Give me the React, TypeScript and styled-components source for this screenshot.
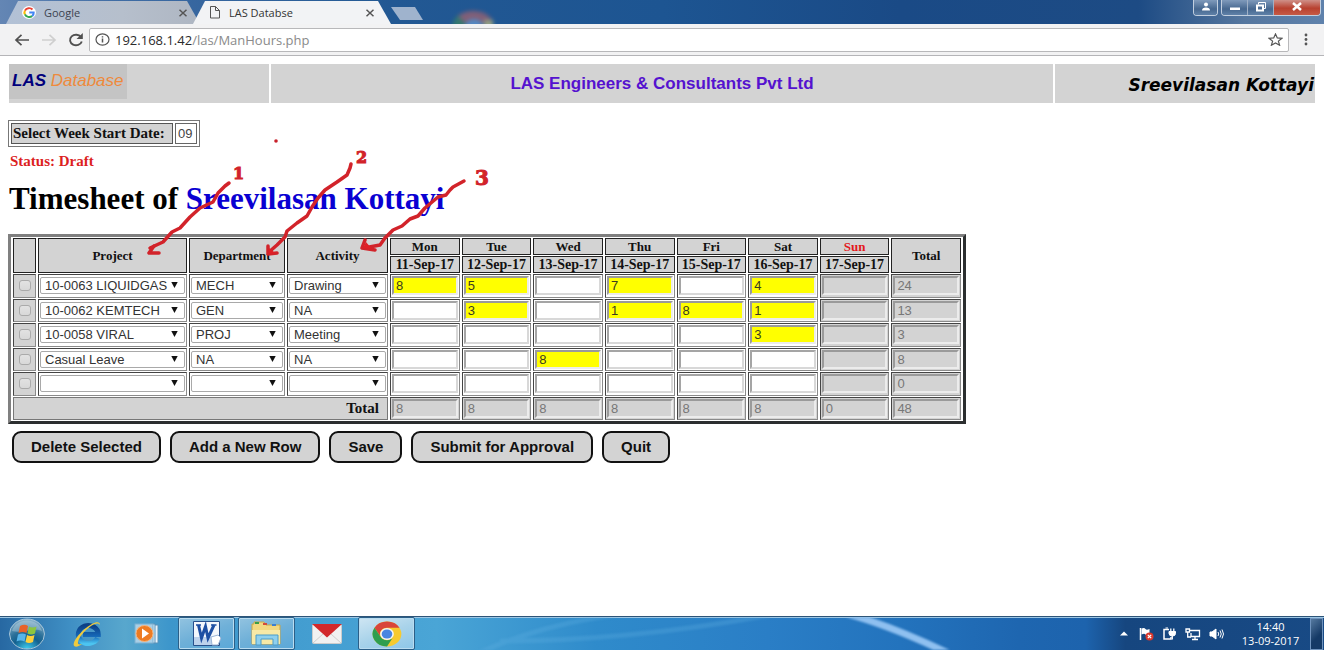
import React, { useState } from "react";
import styled, { createGlobalStyle } from "styled-components";

const ui = '"Open Sans", "Noto Sans", sans-serif';
const sans = '"Liberation Sans", Arial, sans-serif';
const serif = '"Liberation Serif", "Times New Roman", serif';

const GlobalStyle = createGlobalStyle`
  * { box-sizing: border-box; }
  body { margin: 0; background: #fff; font-family: ${serif}; color: #111; }
  button, input, select { font: inherit; margin: 0; }
`;

const Desktop = styled.div`
  display: flex;
  flex-direction: column;
  min-height: 100vh;
`;

/* ---------- browser chrome ---------- */

const TabStrip = styled.header`
  position: relative;
  display: flex;
  align-items: flex-start;
  justify-content: space-between;
  height: 24px;
  overflow: hidden;
  background: linear-gradient(90deg, #6486b4 0, #3f6ca4 120px, #225893 390px, #1d5592 50%, #1a4a86 68%, #1d4b84 86%, #56779f 94%, #5f82ac 100%);
`;

const Tabs = styled.nav`
  display: flex;
  align-items: flex-end;
  height: 24px;
  padding-left: 6px;
`;

const Tab = styled.button<{ $active?: boolean }>`
  display: flex;
  align-items: center;
  gap: 8px;
  width: ${(p) => (p.$active ? 198 : 194)}px;
  height: 24px;
  margin-right: ${(p) => (p.$active ? 0 : -7)}px;
  padding: 1px ${(p) => (p.$active ? 16 : 12)}px 0 16px;
  border: 0;
  font: 11px/16px ${ui};
  color: ${(p) => (p.$active ? "#333" : "#3c4350")};
  text-align: left;
  background: ${(p) => (p.$active ? "#f2f3f5" : "linear-gradient(90deg, #b2c1d6, #b6bfcc 60%, #aeb6c2)")};
  clip-path: polygon(0 100%, 12px 1px, calc(100% - 13px) 1px, 100% 100%);
`;

const TabTitle = styled.span`
  flex: 1;
`;

const NewTab = styled.button`
  width: 32px;
  height: 13px;
  margin: 0 0 4px;
  padding: 0;
  border: 0;
  background: #9fb3cd;
  clip-path: polygon(0 0, 24px 0, 100% 100%, 9px 100%);
`;

const DesktopGlow = styled.svg`
  position: absolute;
  left: 448px;
  top: 4px;
  filter: blur(2px);
`;

const WindowControls = styled.div`
  display: flex;
  gap: 3px;
  padding-right: 3px;
`;

const ControlGroup = styled.div`
  display: flex;
  height: 16px;
  border: 1px solid #c2cfdf;
  border-top: 0;
  border-radius: 0 0 4px 4px;
  overflow: hidden;
`;

const ControlButton = styled.button<{ $wide?: boolean; $danger?: boolean }>`
  display: flex;
  align-items: center;
  justify-content: center;
  width: ${(p) => (p.$wide ? 46 : p.$danger === false ? 23 : 26)}px;
  height: 15px;
  padding: 0 0 2px;
  border: 0;
  border-right: 1px solid #9fb0c6;
  background: ${(p) =>
    p.$danger ? "linear-gradient(#cf9088, #b8412f 55%, #c65a45)" : "linear-gradient(#7f9abb, #46678f 60%, #5f81a8)"};
  &:last-child { border-right: 0; }
`;

const Toolbar = styled.div`
  display: flex;
  align-items: center;
  height: 32px;
  padding: 0 9px 0 8px;
  background: #f2f2f3;
  border-bottom: 1px solid #b5b5b8;
`;

const NavButton = styled.button`
  display: flex;
  align-items: center;
  justify-content: center;
  width: 27px;
  height: 24px;
  padding: 0;
  border: 0;
  background: none;
  &:last-of-type { width: 18px; }
`;

const AddressBar = styled.div`
  flex: 1;
  display: flex;
  align-items: center;
  height: 24px;
  margin: 0 8px 0 0;
  padding: 0 5px;
  gap: 5px;
  background: #fff;
  border: 1px solid #b8b8ba;
  border-radius: 2px;
`;

const Address = styled.span`
  flex: 1;
  font: 13px/18px ${ui};
  color: #8a8a8a;
`;

const Host = styled.span`
  color: #2b2b2b;
`;

/* ---------- page ---------- */

const Page = styled.main`
  position: relative;
  flex: 1;
  padding: 8px 9px;
  background: #fff;
`;

const Banner = styled.div`
  display: grid;
  grid-template-columns: 1fr 3fr 1fr;
  gap: 2px;
  height: 39px;
`;

const BannerCell = styled.div<{ $align?: string }>`
  display: flex;
  align-items: center;
  justify-content: ${(p) => p.$align || "center"};
  background: #d3d3d3;
`;

const Logo = styled.div`
  align-self: flex-start;
  width: 118px;
  height: 35px;
  padding-left: 3px;
  background: #c4c4c4;
  font: italic 17px/34px ${sans};
  white-space: nowrap;
  color: #ee8a3c;
`;

const LogoMark = styled.span`
  font-weight: bold;
  color: #00007c;
`;

const Company = styled.span`
  font: bold 17px/24px ${sans};
  color: #5512cf;
`;

const UserName = styled.span`
  padding: 2px 1px 0 0;
  font: italic bold 17px/24px "DejaVu Sans", Verdana, sans-serif;
  color: #000;
`;

const WeekPicker = styled.div`
  display: inline-flex;
  gap: 2px;
  height: 27px;
  margin: 17px 0 0 -1px;
  padding: 2px;
  border: 1px solid #777;
`;

const WeekLabel = styled.label`
  height: 21px;
  width: 162px;
  padding: 0 1px;
  border: 1px solid #555;
  background: #d3d3d3;
  font: bold 15px/19px ${serif};
  white-space: nowrap;
`;

const WeekInput = styled.input`
  width: 22px;
  height: 21px;
  padding: 0 2px;
  border: 1px solid #666;
  background: #fff;
  font: 13px/19px ${sans};
  color: #444;
`;

const Status = styled.p`
  margin: 5px 0 0 1px;
  font: bold 15px/18px ${serif};
  color: #dc1f1f;
`;

const Title = styled.h1`
  margin: 11px 0 0;
  font: bold 31px/36px ${serif};
  color: #000;
`;

const Owner = styled.span`
  color: #0a00d2;
`;

const Sheet = styled.table`
  width: 958px;
  height: 190px;
  margin: 17px 0 0 -1px;
  table-layout: fixed;
  border: 3px solid #808080;
  border-right-color: #2c2f30;
  border-bottom-color: #2c2f30;
  border-spacing: 2px 1px;
`;

const Col = styled.col<{ $w?: number }>`
  ${(p) => p.$w && `width: ${p.$w}px;`}
`;

const Head = styled.th<{ $date?: boolean; $off?: boolean }>`
  height: 17px;
  padding: 0;
  border: 1px solid #222;
  background: #d3d3d3;
  font: bold ${(p) => (p.$date ? 14 : 13)}px/15px ${serif};
  color: ${(p) => (p.$off ? "#e3191c" : "#111")};
  white-space: nowrap;
`;

const Cell = styled.td<{ $muted?: boolean }>`
  height: 23px;
  padding: 1px;
  border: 1px solid;
  border-color: #444 #8a8a8a #8a8a8a #444;
  background: ${(p) => (p.$muted ? "#d3d3d3" : "#fff")};
  text-align: center;
  line-height: 0;
`;

const FootLabel = styled.th`
  padding: 0 8px 0 0;
  border: 1px solid #777;
  background: #d3d3d3;
  font: bold 15px/19px ${serif};
  text-align: right;
`;

const HourInput = styled.input<{ $tone: "filled" | "blank" | "muted" }>`
  display: block;
  width: 100%;
  height: 19px;
  padding: 0 2px;
  border: 2px solid;
  border-color: ${(p) => (p.$tone === "blank" ? "#a5a5a5 #d8d8d8 #d8d8d8 #a5a5a5" : "#9a9a9a #ececec #ececec #9a9a9a")};
  border-radius: 0;
  background: ${(p) => ({ filled: "#ff0", blank: "#fff", muted: "#d3d3d3" })[p.$tone]};
  font: 13px/15px ${sans};
  color: ${(p) => (p.$tone === "muted" ? "#777" : "#3a3a20")};
`;

const SelectBox = styled.div`
  position: relative;
`;

const SelectField = styled.select`
  display: block;
  appearance: none;
  width: 100%;
  height: 17px;
  padding: 0 16px 0 4px;
  border: 1px solid #a9a9a9;
  border-radius: 2px;
  background: #fff;
  font: 13px/15px ${sans};
  color: #333;
`;

const Caret = styled.svg`
  position: absolute;
  right: 7px;
  top: 5px;
  pointer-events: none;
`;

const Check = styled.input`
  appearance: none;
  width: 12px;
  height: 11px;
  border: 1px solid #aaa;
  border-radius: 3px;
  background: linear-gradient(#e2e2e2, #d8d8d8);
  &:checked { background: #555; }
`;

const Actions = styled.div`
  display: flex;
  gap: 9px;
  margin: 7px 0 0 3px;
`;

const ActionButton = styled.button`
  height: 32px;
  padding: 0 17px;
  border: 2px solid #111;
  border-radius: 9px;
  background: #d3d3d3;
  font: bold 15px/20px ${sans};
  color: #111;
`;

const Markup = styled.svg`
  position: absolute;
  left: 0;
  top: 0;
  pointer-events: none;
`;

/* ---------- taskbar ---------- */

const Taskbar = styled.footer`
  position: relative;
  display: flex;
  justify-content: space-between;
  height: 34px;
  overflow: hidden;
  border-top: 1px solid #2d5478;
  box-shadow: inset 0 1px 0 #9cc6e4;
  background: linear-gradient(90deg, #2768a2 0, #3f8fc4 70px, #58a7cd 125px, #3d96cb 170px, #4aa5d6 33%, #2f8bcb 45%, #2a7ec6 58%, #2373bd 68%, #1e66b0 77%, #1d63ad 82%, #16467f 85%, #184a85 100%);
`;

const Streaks = styled.svg`
  position: absolute;
  left: 440px;
  top: 0;
  filter: blur(1px);
`;

const TaskButtons = styled.div`
  display: flex;
  gap: 3px;
  margin-left: -2px;
`;

const TaskButton = styled.button<{ $open?: boolean; $bright?: boolean }>`
  display: flex;
  align-items: center;
  justify-content: center;
  width: 57px;
  height: 33px;
  padding: 0;
  border: 1px solid ${(p) => (p.$open ? "#2b5f88" : "transparent")};
  border-radius: 2px;
  box-shadow: ${(p) => (p.$open ? "inset 0 0 0 1px #b9dcf0" : "none")};
  background: ${(p) =>
    p.$bright
      ? "linear-gradient(160deg, #cfe6f3, #a9d3ea 50%, #8cc6e8)"
      : p.$open
        ? "linear-gradient(160deg, #92c3e0, #6fb0d8 50%, #5aa8d8)"
        : "none"};
`;

const Tray = styled.div`
  position: relative;
  display: flex;
  align-items: center;
  gap: 8px;
  padding-right: 1px;
`;

const Clock = styled.time`
  width: 70px;
  padding-left: 7px;
  font: 11px/14px ${ui};
  color: #fff;
  text-align: center;
`;

const ShowDesktop = styled.button`
  width: 13px;
  height: 32px;
  padding: 0;
  border: 1px solid #6f93bd;
  background: linear-gradient(135deg, #55799f, #153a66 60%);
`;

/* ---------- data ---------- */

const days = [
  ["Mon", "11-Sep-17"],
  ["Tue", "12-Sep-17"],
  ["Wed", "13-Sep-17"],
  ["Thu", "14-Sep-17"],
  ["Fri", "15-Sep-17"],
  ["Sat", "16-Sep-17"],
  ["Sun", "17-Sep-17"],
];

const rows = [
  { project: "10-0063 LIQUIDGAS", dept: "MECH", activity: "Drawing", hours: ["8", "5", "", "7", "", "4"], total: "24" },
  { project: "10-0062 KEMTECH", dept: "GEN", activity: "NA", hours: ["", "3", "", "1", "8", "1"], total: "13" },
  { project: "10-0058 VIRAL", dept: "PROJ", activity: "Meeting", hours: ["", "", "", "", "", "3"], total: "3" },
  { project: "Casual Leave", dept: "NA", activity: "NA", hours: ["", "", "8", "", "", ""], total: "8" },
  { project: "", dept: "", activity: "", hours: ["", "", "", "", "", ""], total: "0" },
];

const projects = ["", "10-0063 LIQUIDGAS", "10-0062 KEMTECH", "10-0058 VIRAL", "Casual Leave"];
const departments = ["", "MECH", "GEN", "PROJ", "NA"];
const activities = ["", "Drawing", "Meeting", "NA"];
const dayTotals = ["8", "8", "8", "8", "8", "8", "0", "48"];

function Picker({ label, value, options }: { label: string; value: string; options: string[] }) {
  return (
    <SelectBox>
      <SelectField aria-label={label} defaultValue={value}>
        {options.map((o) => (
          <option key={o}>{o}</option>
        ))}
      </SelectField>
      <Caret width="7" height="6" viewBox="0 0 7 6">
        <path d="M.3 0h6.400L3.500 6z" fill="#111" />
      </Caret>
    </SelectBox>
  );
}

function Hour({ label, initial }: { label: string; initial: string }) {
  const [value, setValue] = useState(initial);
  return (
    <HourInput
      aria-label={label}
      value={value}
      $tone={value ? "filled" : "blank"}
      onChange={(e) => setValue(e.target.value)}
    />
  );
}

/* ---------- icons ---------- */

const CloseGlyph = () => (
  <svg width="10" height="8" viewBox="0 0 10 8">
    <path d="M1.500 .8l7 6.400M8.500 .8l-7 6.400" stroke="#555" strokeWidth="1.500" />
  </svg>
);

const GoogleIcon = () => (
  <svg width="14" height="13" viewBox="0 0 48 48" preserveAspectRatio="none">
    <circle cx="24" cy="24" r="24" fill="#fff" />
    <g fill="none" strokeWidth="7">
      <path d="M36 13A16 16 0 0 0 10 17" stroke="#ea4335" />
      <path d="M10 17a16 16 0 0 0 0 14" stroke="#fbbc05" />
      <path d="M10 31a16 16 0 0 0 25 6" stroke="#34a853" />
      <path d="M35 37a16 16 0 0 0 5-13H25" stroke="#4285f4" />
    </g>
  </svg>
);

const ChromeIcon = ({ width = 30, height = 26 }) => (
  <svg width={width} height={height} viewBox="0 0 48 48" preserveAspectRatio="none">
    <circle cx="24" cy="24" r="23" fill="#f7ca2e" />
    <path d="M4 12.500A23 23 0 0 1 44 12.500H24a11.500 11.500 0 0 0-10 17z" fill="#d9453a" />
    <path d="M4 12.500A23 23 0 0 0 24 47l10-17.300a11.500 11.500 0 0 1-20 0z" fill="#2f9e4f" />
    <circle cx="24" cy="24" r="11" fill="#f4f4f4" />
    <circle cx="24" cy="24" r="8.500" fill="#4a86e0" />
  </svg>
);

const StartIcon = () => (
  <svg width="38" height="32" viewBox="0 0 38 32">
    <defs>
      <radialGradient id="orb" cx=".5" cy="1" r="1">
        <stop offset="0" stopColor="#3fd0f2" />
        <stop offset=".4" stopColor="#12608f" />
        <stop offset=".6" stopColor="#2b7099" />
        <stop offset="1" stopColor="#8fb8d0" />
      </radialGradient>
    </defs>
    <ellipse cx="19" cy="16" rx="17.500" ry="15" fill="url(#orb)" stroke="#a6c4d8" />
    <path d="M4 13c4-14 26-14 30 0-8-4-20 3-30 0z" fill="#c3d8e4" opacity=".4" />
    <path d="M12 8q4.500-2.500 8 0l-1.500 7q-4-2-8 0z" fill="#e8622a" />
    <path d="M21 8.500q3.500 2 7.500 0l-1.500 7q-4 2-7.500 0z" fill="#8cc63f" />
    <path d="M10 16.500q4.500-2 8 0l-1.500 7q-4-2-8 0z" fill="#57b5ea" />
    <path d="M19 17q3.500 2 7.500 0l-1.500 7q-4 2-7.500 0z" fill="#fccf3c" />
  </svg>
);

const IEIcon = () => (
  <svg width="32" height="28" viewBox="0 0 32 28">
    <defs>
      <linearGradient id="ie" x1="0" y1="0" x2="0" y2="1">
        <stop offset="0" stopColor="#0c3f86" />
        <stop offset=".6" stopColor="#1568b8" />
        <stop offset="1" stopColor="#4cc4f0" />
      </linearGradient>
    </defs>
    <path d="M26.500 18a10 9 0 1 1 .8-3.500H12" fill="none" stroke="url(#ie)" strokeWidth="5" />
    <path d="M29 5c0-5-7-3-14 3C6 15 0 25 4 26.500c2 .6 5-1 7-2.500-3 1-4.500 .5-4-2C8 17 14 10 20 6c4-2.500 7-3.500 9-1z" fill="#f0cb3d" />
  </svg>
);

const MediaIcon = () => (
  <svg width="26" height="21" viewBox="0 0 26 21">
    <path d="M20 2h4v18h-4z" fill="#e9f3fa" stroke="#5a92b8" />
    <path d="M17 1h4v19h-4z" fill="#d8eaf5" stroke="#5a92b8" />
    <rect x="1" y="1" width="18" height="19" fill="#a9cfe6" stroke="#7db1d2" />
    <ellipse cx="10.500" cy="10.500" rx="8.500" ry="8" fill="#ee7b22" stroke="#f7b47c" />
    <path d="M8 5.500l7 5-7 5z" fill="#fff" />
  </svg>
);

const WordIcon = () => (
  <svg width="29" height="27" viewBox="0 0 29 27">
    <path d="M1.500 1.500h26v24h-26z" fill="#f3f7fc" stroke="#27508c" />
    <path d="M2 17h20v8H2z" fill="#bdd2ec" />
    <path d="M6.500 5l3 13L13.500 6.500l2.500 11.500L22 5" fill="none" stroke="#1d4fa3" strokeWidth="3" />
    <path d="M4 5h5M19 5h5.500" fill="none" stroke="#1d4fa3" strokeWidth="1.500" />
    <path d="M19 17l7-2 3 3-3 7h-6z" fill="#fff" stroke="#9ab4d6" />
  </svg>
);

const FolderIcon = () => (
  <svg width="33" height="27" viewBox="0 0 33 27">
    <path d="M2 4h2V2h10l2 3h14v19H2z" fill="#f2d982" stroke="#c9a648" />
    <path d="M5 2h4v2H5z" fill="#3a9d47" />
    <path d="M13 3h4v2h-4z" fill="#d24a3c" />
    <path d="M22 4h4v2h-4z" fill="#3c7fd0" />
    <path d="M2 10h28v14H2z" fill="#f8e9a6" />
    <path d="M6 25V15h22v10h-5v-6H11v6z" fill="#8fd0ee" stroke="#4d9cc8" />
  </svg>
);

const MailIcon = () => (
  <svg width="30" height="20" viewBox="0 0 30 20">
    <rect x=".5" y=".5" width="29" height="19" rx="1" fill="#f1f1f1" stroke="#ccc" />
    <path d="M1 19l10-9M29 19l-10-9" stroke="#cfcfcf" />
    <path d="M0 0h30L15 13.500z" fill="#d2282b" />
  </svg>
);

const FlagIcon = () => (
  <svg width="15" height="14" viewBox="0 0 15 14">
    <path d="M1.500 1v12" stroke="#fff" strokeWidth="1.500" />
    <path d="M2.500 1.500q3-1 4 .5t4 0v6q-3 1-4-.5t-4 0z" fill="#fff" />
    <circle cx="10.500" cy="9.500" r="4" fill="#d8372c" />
    <path d="M8.800 7.800l3.400 3.400M12.200 7.800l-3.400 3.400" stroke="#fff" strokeWidth="1.200" />
  </svg>
);

const PowerIcon = () => (
  <svg width="15" height="14" viewBox="0 0 15 14" fill="none" stroke="#fff">
    <path d="M7 2.500H2v9.500h7V10" strokeWidth="1.500" />
    <path d="M3.500 1H6" />
    <path d="M7 4.500h6.500v2q0 2.500-3.200 2.500T7 6.500z" fill="#fff" />
    <path d="M8.800 1.500v3M11.800 1.500v3M10.300 9v3.500" strokeWidth="1.300" />
  </svg>
);

const NetworkIcon = () => (
  <svg width="16" height="14" viewBox="0 0 16 14" fill="none" stroke="#fff" strokeWidth="1.300">
    <path d="M5 3.500h9.500v6H6V6M7 12.500h6M10 10v2" />
    <path d="M1 2h3.500v3H1zM2.700 5v5H6" />
  </svg>
);

const SoundIcon = () => (
  <svg width="15" height="12" viewBox="0 0 15 12" fill="none" stroke="#fff">
    <path d="M1 4h2l4-3v10L3 8H1z" fill="#fff" />
    <path d="M9 4q1.500 2 0 4M11 2.500q2.500 3.500 0 7M13 1.500q3 4.500 0 9" />
  </svg>
);

export default function App() {
  return (
    <Desktop>
      <GlobalStyle />
      <TabStrip>
        <Tabs aria-label="Browser tabs">
          <Tab>
            <GoogleIcon />
            <TabTitle>Google</TabTitle>
            <CloseGlyph />
          </Tab>
          <Tab $active>
            <svg width="12" height="13" viewBox="0 0 12 13" fill="none" stroke="#555">
              <path d="M1.500 .5h5l4 4v7.500h-9zM6.500 .5v4h4" />
            </svg>
            <TabTitle>LAS Databse</TabTitle>
            <CloseGlyph />
          </Tab>
          <NewTab aria-label="New tab" />
        </Tabs>
        <DesktopGlow width="52" height="44" viewBox="0 0 52 44" opacity=".65">
          <path d="M4 24a22 19 0 0 1 8-14l8 14z" fill="#3e8a5c" />
          <path d="M10 12a20 14 0 0 1 34 4l-8 4H18z" fill="#b5646a" />
          <path d="M36 16h9v8h-9z" fill="#cfc87a" />
          <ellipse cx="26" cy="23" rx="9" ry="8" fill="#6fa3dc" />
        </DesktopGlow>
        <WindowControls>
          <ControlGroup>
            <ControlButton $danger={false} aria-label="Profile">
              <svg width="10" height="9" viewBox="0 0 10 9" fill="#fff">
                <circle cx="5" cy="2.500" r="2" />
                <path d="M1 8.500q0-3 4-3t4 3z" />
              </svg>
            </ControlButton>
          </ControlGroup>
          <ControlGroup>
            <ControlButton aria-label="Minimize">
              <svg width="12" height="9" viewBox="0 0 12 9">
                <path d="M1 5.500h10v2.500H1z" fill="#fff" />
              </svg>
            </ControlButton>
            <ControlButton aria-label="Restore">
              <svg width="12" height="10" viewBox="0 0 12 10" fill="none" stroke="#fff">
                <path d="M3.500 2.500V.5h7v6h-2" />
                <path d="M2 3.500h6v5H2z" strokeWidth="2" />
              </svg>
            </ControlButton>
            <ControlButton $wide $danger aria-label="Close">
              <svg width="12" height="9" viewBox="0 0 12 9">
                <path d="M2 1l8 7M10 1L2 8" stroke="#fff" strokeWidth="2.500" />
              </svg>
            </ControlButton>
          </ControlGroup>
        </WindowControls>
      </TabStrip>

      <Toolbar>
        <NavButton aria-label="Back">
          <svg width="16" height="12" viewBox="0 0 16 12" fill="none" stroke="#505050" strokeWidth="1.700">
            <path d="M15 6H2M7.500 .8L2 6l5.500 5.200" />
          </svg>
        </NavButton>
        <NavButton aria-label="Forward">
          <svg width="16" height="12" viewBox="0 0 16 12" fill="none" stroke="#cfcfcf" strokeWidth="1.700">
            <path d="M1 6h13M8.500 .8L14 6l-5.500 5.200" />
          </svg>
        </NavButton>
        <NavButton aria-label="Reload">
          <svg width="16" height="14" viewBox="0 0 16 14">
            <path d="M13 4A6 5.300 0 1 0 13.800 8.500" fill="none" stroke="#505050" strokeWidth="1.900" />
            <path d="M14.800 0v6H8.500z" fill="#505050" />
          </svg>
        </NavButton>
        <AddressBar>
          <svg width="15" height="13" viewBox="0 0 15 13" fill="none" stroke="#555" strokeWidth="1.200">
            <ellipse cx="7.500" cy="6.500" rx="6.500" ry="5.700" />
            <path d="M7.500 5.500v4M7.500 3.200v1.300" strokeWidth="1.500" />
          </svg>
          <Address>
            <Host>192.168.1.42</Host>/las/ManHours.php
          </Address>
          <svg width="15" height="13" viewBox="0 0 15 13" fill="none" stroke="#555" strokeWidth="1.200">
            <path d="M7.500 1l1.800 3.900 4.700 .4-3.600 2.800 1.200 4.100-4.100-2.300-4.100 2.300 1.200-4.100L1 5.300l4.700-.4z" />
          </svg>
        </AddressBar>
        <NavButton aria-label="Menu">
          <svg width="4" height="13" viewBox="0 0 4 13" fill="#555">
            <circle cx="2" cy="2" r="1.400" />
            <circle cx="2" cy="6.500" r="1.400" />
            <circle cx="2" cy="11" r="1.400" />
          </svg>
        </NavButton>
      </Toolbar>

      <Page>
        <Banner>
          <BannerCell $align="flex-start">
            <Logo>
              <LogoMark>LAS</LogoMark> Database
            </Logo>
          </BannerCell>
          <BannerCell>
            <Company>LAS Engineers &amp; Consultants Pvt Ltd</Company>
          </BannerCell>
          <BannerCell $align="flex-end">
            <UserName>Sreevilasan Kottayi</UserName>
          </BannerCell>
        </Banner>

        <WeekPicker>
          <WeekLabel htmlFor="week">Select Week Start Date:</WeekLabel>
          <WeekInput id="week" defaultValue="09" />
        </WeekPicker>
        <Status>Status: Draft</Status>
        <Title>
          Timesheet of <Owner>Sreevilasan Kottayi</Owner>
        </Title>

        <Sheet>
          <colgroup>
            <Col $w={23} />
            <Col $w={149} />
            <Col $w={96} />
            <Col $w={101} />
            {days.map(([d]) => (
              <Col key={d} />
            ))}
            <Col />
          </colgroup>
          <thead>
            <tr>
              <Head rowSpan={2} />
              <Head rowSpan={2}>Project</Head>
              <Head rowSpan={2}>Department</Head>
              <Head rowSpan={2}>Activity</Head>
              {days.map(([d]) => (
                <Head key={d} $off={d === "Sun"}>
                  {d}
                </Head>
              ))}
              <Head rowSpan={2}>Total</Head>
            </tr>
            <tr>
              {days.map(([d, date]) => (
                <Head key={d} $date>
                  {date}
                </Head>
              ))}
            </tr>
          </thead>
          <tbody>
            {rows.map((r, i) => (
              <tr key={i}>
                <Cell $muted>
                  <Check type="checkbox" aria-label={`Select row ${i + 1}`} />
                </Cell>
                <Cell>
                  <Picker label="Project" value={r.project} options={projects} />
                </Cell>
                <Cell>
                  <Picker label="Department" value={r.dept} options={departments} />
                </Cell>
                <Cell>
                  <Picker label="Activity" value={r.activity} options={activities} />
                </Cell>
                {r.hours.map((h, j) => (
                  <Cell key={j}>
                    <Hour label={`${days[j][1]} row ${i + 1}`} initial={h} />
                  </Cell>
                ))}
                <Cell $muted>
                  <HourInput $tone="muted" aria-label="Sunday" disabled />
                </Cell>
                <Cell $muted>
                  <HourInput $tone="muted" aria-label="Row total" disabled defaultValue={r.total} />
                </Cell>
              </tr>
            ))}
            <tr>
              <FootLabel colSpan={4}>Total</FootLabel>
              {dayTotals.map((t, i) => (
                <Cell key={i} $muted>
                  <HourInput $tone="muted" aria-label="Day total" disabled defaultValue={t} />
                </Cell>
              ))}
            </tr>
          </tbody>
        </Sheet>

        <Actions>
          <ActionButton>Delete Selected</ActionButton>
          <ActionButton>Add a New Row</ActionButton>
          <ActionButton>Save</ActionButton>
          <ActionButton>Submit for Approval</ActionButton>
          <ActionButton>Quit</ActionButton>
        </Actions>

        <Markup width="500" height="210" viewBox="0 56 500 210">
          <g fill="none" stroke="#d2232a" strokeWidth="3.500" strokeLinecap="round" strokeLinejoin="round">
            <path d="M229 183l-4 3-7 7-5 9-13 6-10 9-10 11-8 4-9 10-13 6" />
            <path d="M351 164l-1 4-3 7-10 7-12 8-7 8-6 9-5 9-10 7-10 8-2 6-8 8-8 7" />
            <path d="M464 181l-11 6-3 3-4 5-8 2-13 11-7 8-8 3-8 7-9 4-8 8-5 7-16 3" />
            <path d="M154 246l-5 7 10 0M268 246v8l9-1M365 240l-3 8 13 2" />
          </g>
          <path d="M269 248v6l6-1zM366 242l-3 6 9 1z" fill="#e01f26" />
          <circle cx="276" cy="141" r="1.800" fill="#c8202a" />
          <g fill="#d2232a" stroke="#d2232a" fontFamily='"DejaVu Serif", serif' fontWeight="bold" fontSize="16">
            <text x="233" y="179">1</text>
            <text x="356" y="163">2</text>
            <text x="475" y="185" fontSize="20">3</text>
          </g>
        </Markup>
      </Page>

      <Taskbar>
        <Streaks width="560" height="33" viewBox="0 0 560 33" fill="none">
          <path d="M404 -4Q450 8 512 38" stroke="#8fc0f0" strokeWidth="7" />
          <path d="M30 40Q100 6 190 -4M60 24Q190 24 330 -2" stroke="#5fb0e0" strokeWidth="5" opacity=".3" />
        </Streaks>
        <TaskButtons>
          <TaskButton aria-label="Start">
            <StartIcon />
          </TaskButton>
          <TaskButton aria-label="Internet Explorer">
            <IEIcon />
          </TaskButton>
          <TaskButton aria-label="Media Player">
            <MediaIcon />
          </TaskButton>
          <TaskButton $open aria-label="Word">
            <WordIcon />
          </TaskButton>
          <TaskButton $open aria-label="Explorer">
            <FolderIcon />
          </TaskButton>
          <TaskButton aria-label="Mail">
            <MailIcon />
          </TaskButton>
          <TaskButton $open $bright aria-label="Chrome">
            <ChromeIcon />
          </TaskButton>
        </TaskButtons>
        <Tray>
          <svg width="14" height="5" viewBox="0 0 14 5">
            <path d="M3 4.500L7 .5l4 4z" fill="#fff" />
          </svg>
          <FlagIcon />
          <PowerIcon />
          <NetworkIcon />
          <SoundIcon />
          <Clock>
            14:40
            <br />
            13-09-2017
          </Clock>
          <ShowDesktop aria-label="Show desktop" />
        </Tray>
      </Taskbar>
    </Desktop>
  );
}
